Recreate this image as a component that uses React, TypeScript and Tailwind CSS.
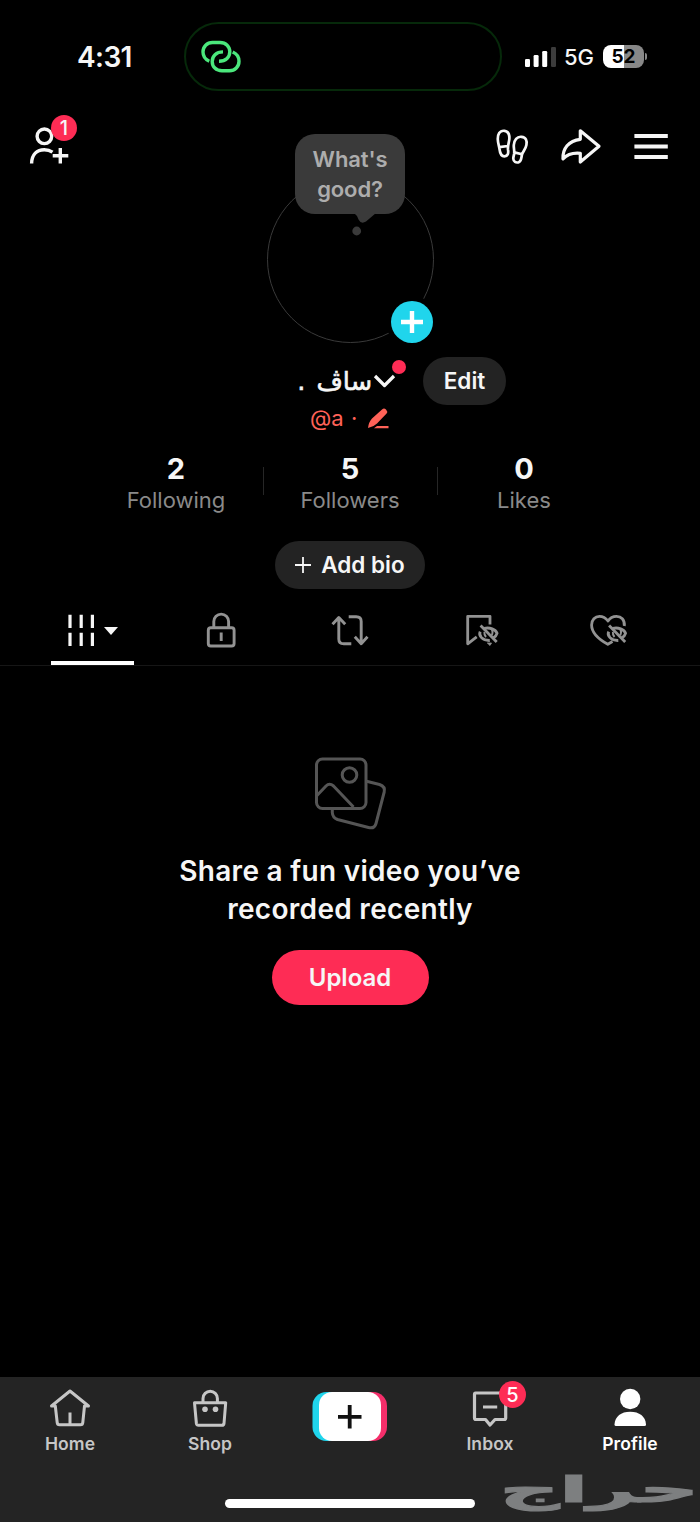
import type { ReactNode } from "react";

type IconProps = { box: string; w: number; h: number; className?: string; sw?: number; children: ReactNode };

function Icon({ box, w, h, className = "", sw = 3, children }: IconProps) {
  return (
    <svg viewBox={box} width={w} height={h} className={`block shrink-0 ${className}`} fill="none" stroke="currentColor" strokeWidth={sw} strokeLinejoin="round">
      {children}
    </svg>
  );
}

function StatusBar() {
  return (
    <div className="flex h-[112px] items-start pt-[22px]">
      <div className="w-[184px] pt-[18px] pl-[77px] text-[28px] leading-[34px] font-semibold tracking-[-0.6px]">4:31</div>
      <div className="flex h-[69px] w-[318px] items-center rounded-full border-2 border-[#06290a] pl-[13px]">
        <Icon box="199 38 44 37" w={44} h={37} sw={3.4} className="text-[#4be77c]">
          <path d="M209.3 61.2C205.5 59.5 203 56 203 52C203 46.5 207 42.5 212.5 42.5H220C226 42.5 229.8 46.5 229.8 51.8C229.8 57 226 61.3 219 61.3" />
          <path d="M209.3 61.2C205.5 59.5 203 56 203 52C203 46.5 207 42.5 212.5 42.5H220C226 42.5 229.8 46.5 229.8 51.8C229.8 57 226 61.3 219 61.3" transform="rotate(180 221 56.6)" />
        </Icon>
      </div>
      <div className="ml-[23px] flex h-[69px] items-center">
        <Icon box="0 0 31 20" w={31} h={20} className="mt-[1px] mr-[8px]">
          <g fill="white" stroke="none">
            <rect x="0" y="12" width="5" height="8" rx="1.3" />
            <rect x="8.6" y="8" width="5" height="12" rx="1.3" />
            <rect x="17.2" y="4" width="5" height="16" rx="1.3" />
            <rect x="26" y="0" width="5" height="20" rx="1.3" fill="#3c3c3c" />
          </g>
        </Icon>
        <span className="mt-[1px] w-[39px] text-[22px] leading-[26px] font-medium">5G</span>
        <div className="flex h-[23px] w-[41px] items-center justify-center rounded-[8px] bg-[linear-gradient(90deg,#fff_52%,#888_52%)] text-[19px] leading-none font-bold text-black">52</div>
        <div className="ml-px h-[7px] w-[2px] rounded-r-full bg-[#888]" />
      </div>
    </div>
  );
}

function ProfileHeader() {
  return (
    <div className="flex h-[245px] items-start pr-[32px] pl-[28px]">
      <div className="relative w-[238px]">
        <Icon box="28 112 52 56" w={52} h={56} sw={3.4}>
          <circle cx="44.4" cy="136.3" r="7.3" />
          <path d="M31.6 163.5C31.8 154.5 37 149.8 44.3 149.8C47.7 149.8 50.3 150.7 52.5 152.2M52.7 155.7H68.3M60.3 148V163.6" />
        </Icon>
        <span className="absolute top-[3px] left-[23px] flex size-[26px] items-center justify-center rounded-full bg-[#fe2c55] text-[20px] leading-none font-medium">1</span>
      </div>

      <div className="relative flex h-[245px] w-[168px] flex-col items-center pt-[22px]">
        <div className="absolute top-[64px] left-[0.5px] size-[167px] rounded-full border-[1.5px] border-[#3a3a3a]" />
        <div className="relative flex h-[80px] w-[110px] items-center justify-center rounded-[20px] bg-[#3a3a3a] pt-px text-center text-[22px] leading-[29.5px] font-semibold tracking-[-0.1px] text-[#adadad]">
          What's<br />good?
        </div>
        <Icon box="345 213 40 24" w={40} h={24} className="relative -mt-px ml-[30px] text-[#3a3a3a]">
          <g fill="currentColor" stroke="none">
            <path d="M354 213H376L366 221.5Q361 224.5 358.5 219.5Q357 215 354 213Z" />
            <circle cx="356.7" cy="231" r="4.4" />
          </g>
        </Icon>
        <div className="absolute top-[184px] left-[120px] flex size-[52px] items-center justify-center rounded-full bg-black">
          <div className="flex size-[42px] items-center justify-center rounded-full bg-[#20d5ec]">
            <Icon box="0 0 24 24" w={24} h={24} sw={4.4} className="text-white"><path d="M1 12H23M12 1V23" /></Icon>
          </div>
        </div>
      </div>

      <div className="ml-[61px] flex w-[173px] items-center pt-[14px]">
        <Icon box="495 126 34 40" w={34} h={40} sw={2.7}>
          <path d="M504.5 130.8C499.5 130.3 497.6 134.5 497.8 139.5C497.9 143 499 145.5 499.5 149C500 153.5 501.3 156.3 504.4 156.3C507.8 156.2 508.7 153.5 508 149.5C507.5 145 509.4 142 509.4 138C509.4 134 508.2 131.2 504.5 130.8ZM499.3 147.2L507.8 146" />
          <path d="M521.5 136.8C517 136.3 514.2 140 513.8 145C513.5 148 514.6 150 514.2 153.5C513.8 156 513.2 157 513.3 158.8C513.5 162 516 162.8 518.2 162.4C521.5 161.7 521.2 158 521.9 155C522.7 151.5 525.6 149.5 526.4 145C527.2 140.5 526 137.2 521.5 136.8ZM514.3 152.4L522 154.2" />
        </Icon>
        <Icon box="559 126 44 40" w={44} h={40} sw={3.2} className="ml-[30px]">
          <path d="M580.3 130.8L599 146.3L580.3 162V153.3C572 152.5 567 154.5 563 158.8C562.5 149 568.5 140.5 580.3 139.3Z" />
        </Icon>
        <Icon box="634 126 34 40" w={34} h={40} sw={3.8} className="ml-[31px]">
          <path d="M634.4 136H667.8M634.4 146.5H667.8M634.4 157H667.8" />
        </Icon>
      </div>
    </div>
  );
}

function NameBlock() {
  return (
    <>
      <div className="flex h-[48px] items-center pl-[294px]">
        <span dir="rtl" className="w-[78px] text-right font-['DejaVu_Sans',sans-serif] text-[25.5px] leading-[40px] whitespace-nowrap [word-spacing:3px] [-webkit-text-stroke:0.6px_currentColor]">ساڤ .</span>
        <div className="relative w-[51px]">
          <Icon box="0 0 24 16" w={24} h={16} sw={3.2}><path d="M3 3L12.5 12.5L22 3" /></Icon>
          <span className="absolute -top-[13px] left-[20px] size-[14px] rounded-full bg-[#fe2c55]" />
        </div>
        <button className="h-[48px] w-[83px] rounded-full bg-[#232323] text-[22.5px] font-semibold">Edit</button>
      </div>
      <div className="flex h-[27px] items-center pl-[310px] text-[22px] text-[#ff6258]">
        <span className="w-[41px]">@a</span>
        <span className="w-[15px]">·</span>
        <Icon box="366 406 26 26" w={26} h={26}>
          <path fill="currentColor" stroke="none" d="M368 428Q368.7 422 372 418.5L382.3 409.2Q384 407.6 386 409.4Q388 411.4 386.6 413.4L377 423.5Q373.5 427 368 428ZM377 426H388.5V428.3H374Z" />
        </Icon>
      </div>
    </>
  );
}

function Stat({ value, label }: { value: string; label: string }) {
  return (
    <div className="flex w-[173px] flex-col items-center">
      <span className="text-[29px] leading-[32px] font-bold">{value}</span>
      <span className="text-[22px] leading-[30px] text-[#8a8a8a]">{label}</span>
    </div>
  );
}

function HiddenEye() {
  return (
    <>
      <path d="M-3.5 -5.6C2 -7 7.8 -4.5 9.3 -0.8C8.8 1.2 7.5 2.7 5.7 3.8" />
      <path d="M-7.6 -2.4C-9.5 1.5 -5.5 6.8 2 6.5" />
      <path d="M3.3 -5.5C5 -3.5 5.2 -1.3 4 1.2M-3.4 -2C-3.7 0 -3 1.6 -1.8 3" strokeWidth="2" />
      <path d="M-7.2 -8.5L8.9 8" />
    </>
  );
}

function Tabs() {
  return (
    <div className="flex h-[77px] items-end border-b border-[#161616] pl-[51px]">
      <div className="flex h-[76px] w-[83px] flex-col items-center justify-between">
        <Icon box="68 610 53 40" w={53} h={40} sw={3.2} className="mt-[21px] ml-[2px]">
          <path d="M71 614.7V628M71 632.7V646M82.2 614.7V628M82.2 632.7V646M93.4 614.7V628M93.4 632.7V646" />
          <path d="M105 627H119L112 635Z" fill="currentColor" stroke="none" />
        </Icon>
        <div className="h-[4px] w-full bg-white" />
      </div>
      <div className="flex h-[76px] flex-1 items-start pt-[21px] text-[#929292]">
        <Icon box="201 610 40 40" w={40} h={40} sw={2.9} className="ml-[67px]">
          <rect x="208.3" y="627.7" width="25.8" height="18.3" rx="2.5" />
          <path d="M213.8 627V621.5A7.4 7.4 0 0 1 228.6 621.5V627M221.2 632.5V641" />
        </Icon>
        <Icon box="330 610 40 40" w={40} h={40} sw={2.9} className="ml-[89px]">
          <path d="M332.5 624.3L338.8 617.5L345.2 624.3M338.8 617.5V639Q338.8 643.8 343.8 643.8H351.3M354.8 636.8L361.2 643.7L367.5 636.8M361.2 643.5V621.5Q361.2 616.8 356.2 616.8H348.7" />
        </Icon>
        <Icon box="461 610 40 40" w={40} h={40} sw={2.8} className="ml-[91px]">
          <path d="M490 624.5V616.3H467.7V643.8L476.7 636.8" />
          <path d="M487.3 643H491.5L490 645.5Z" fill="currentColor" strokeWidth="0.8" />
          <g transform="translate(487.8 634)"><HiddenEye /></g>
        </Icon>
        <Icon box="588 610 42 40" w={42} h={40} sw={2.8} className="ml-[87px]">
          <path d="M624.3 626C625 619.5 621 616.3 616.5 616.3Q611 616.3 608 621Q604.5 616.3 599.5 616.3C595 616.3 591.6 620 591.6 625C591.6 633.5 600 640 607.8 644.3L612.5 641.5" />
          <g transform="translate(616.3 634)"><HiddenEye /></g>
        </Icon>
      </div>
    </div>
  );
}

function EmptyState() {
  return (
    <div className="flex flex-1 flex-col items-center pt-[88px]">
      <Icon box="312 754 78 78" w={78} h={78} sw={3} className="text-[#555]">
        <rect x="317.5" y="759" width="49.5" height="49.5" rx="6" />
        <circle cx="350.5" cy="775" r="7.3" />
        <path d="M317.5 796L327 786Q330.5 782.5 334.5 786L354.5 807M367.5 781.2L380.5 784.5Q386.5 786.5 385.2 792L377 823.5Q375.5 829 369.5 827.5L338.5 819.5Q333.5 817.5 333.3 812.5V809" />
      </Icon>
      <p className="mt-[20px] text-center text-[28px] leading-[38px] font-semibold tracking-[0.3px]">
        Share a fun video you’ve<br />recorded recently
      </p>
      <button className="mt-[22px] h-[55px] w-[157px] rounded-full bg-[#fe2c55] text-[24px] font-semibold">Upload</button>
    </div>
  );
}

function NavItem({ label, active = false, children }: { label: string; active?: boolean; children: ReactNode }) {
  return (
    <div className={`flex w-[140px] flex-col items-center pt-[9px] ${active ? "text-white" : "text-[#c6c6c6]"}`}>
      {children}
      <span className="text-[17.5px] leading-[24px] font-semibold tracking-[0.1px]">{label}</span>
    </div>
  );
}

function BottomNav() {
  return (
    <div className="h-[145px] bg-[#242424]">
      <div className="flex h-[98px]">
        <NavItem label="Home">
          <Icon box="48 1386 44 46" w={44} h={46} sw={3}>
            <path d="M51.5 1406L70 1391L88.5 1406H84.5L82.8 1422.5Q82.6 1424.7 80.5 1424.7H59.5Q57.4 1424.7 57.2 1422.5L55.3 1406ZM70 1412.5V1424" />
          </Icon>
        </NavItem>
        <NavItem label="Shop">
          <Icon box="188 1386 44 46" w={44} h={46} sw={3}>
            <path d="M194.5 1402.8H225.7L224 1423.5Q223.8 1425.3 222 1425.3H198.5Q196.7 1425.3 196.4 1423.5ZM203 1402V1398.5A7.2 7.2 0 0 1 217.4 1398.5V1402" />
            <g fill="currentColor" stroke="none"><circle cx="205" cy="1409.3" r="2.8" /><circle cx="215.5" cy="1409.3" r="2.8" /></g>
          </Icon>
        </NavItem>
        <div className="flex w-[140px] justify-center pt-[15px]">
          <Icon box="0 0 76 49" w={76} h={49}>
            <g stroke="none">
              <rect x="0.5" y="0" width="60" height="49" rx="14" fill="#20d5ec" />
              <rect x="15" y="0" width="60" height="49" rx="14" fill="#f52e6a" />
              <rect x="7" y="0" width="62" height="49" rx="13" fill="white" />
            </g>
            <path d="M26 24.8H49.5M37.7 13V36.5" stroke="#111" strokeWidth="3.8" />
          </Icon>
        </div>
        <NavItem label="Inbox">
          <div className="relative">
            <Icon box="468 1386 44 46" w={44} h={46} sw={3.2}>
              <path d="M475.5 1393H504.2Q505.7 1393 505.7 1394.5V1418Q505.7 1419.5 504.2 1419.5H495L490 1425L485.5 1419.5H476Q474.5 1419.5 474.5 1418V1394.5Q474.5 1393 475.5 1393ZM483 1407H497.2" />
            </Icon>
            <span className="absolute -top-[5px] left-[31px] flex size-[27px] items-center justify-center rounded-full bg-[#fe2c55] text-[20px] leading-none font-medium text-white">5</span>
          </div>
        </NavItem>
        <NavItem label="Profile" active>
          <Icon box="608 1386 44 46" w={44} h={46}>
            <g fill="currentColor" stroke="none">
              <circle cx="630.2" cy="1399" r="10.2" />
              <path d="M614.5 1424.5C615 1416.5 621 1411.8 630.2 1411.8S645.5 1416.5 646 1424.5Q646 1426 644.5 1426H616Q614.5 1426 614.5 1424.5Z" />
            </g>
          </Icon>
        </NavItem>
      </div>
      <div className="flex h-[47px] items-start pl-[225px]">
        <div className="mt-[24px] h-[9px] w-[250px] shrink-0 rounded-full bg-white" />
        <div className="-mt-[10px] ml-[40px] h-[50px] w-[185px] shrink-0">
          <span lang="ar" dir="rtl" className="block w-[80px] origin-top-left scale-x-[2.3] text-right font-['DejaVu_Sans',sans-serif] text-[36px] leading-[50px] font-bold text-[#7d7f80] [-webkit-text-stroke:1.2px_currentColor]">حراج</span>
        </div>
      </div>
    </div>
  );
}

export default function App() {
  return (
    <div className="flex h-[1522px] w-[700px] flex-col overflow-hidden bg-black font-['Inter',sans-serif] text-[#f6f6f6]">
      <StatusBar />
      <ProfileHeader />
      <NameBlock />
      <div className="mt-[21px] flex justify-center">
        <Stat value="2" label="Following" />
        <div className="mt-[14px] h-[28px] w-px bg-[#262626]" />
        <Stat value="5" label="Followers" />
        <div className="mt-[14px] h-[28px] w-px bg-[#262626]" />
        <Stat value="0" label="Likes" />
      </div>
      <button className="mx-auto mt-[26px] flex h-[48px] w-[150px] items-center justify-center gap-[10px] rounded-full bg-[#232323] text-[22.5px] font-semibold">
        <Icon box="0 0 16 16" w={16} h={16} sw={1.8}><path d="M0 8H16M8 0V16" /></Icon>
        Add bio
      </button>
      <Tabs />
      <EmptyState />
      <BottomNav />
    </div>
  );
}
